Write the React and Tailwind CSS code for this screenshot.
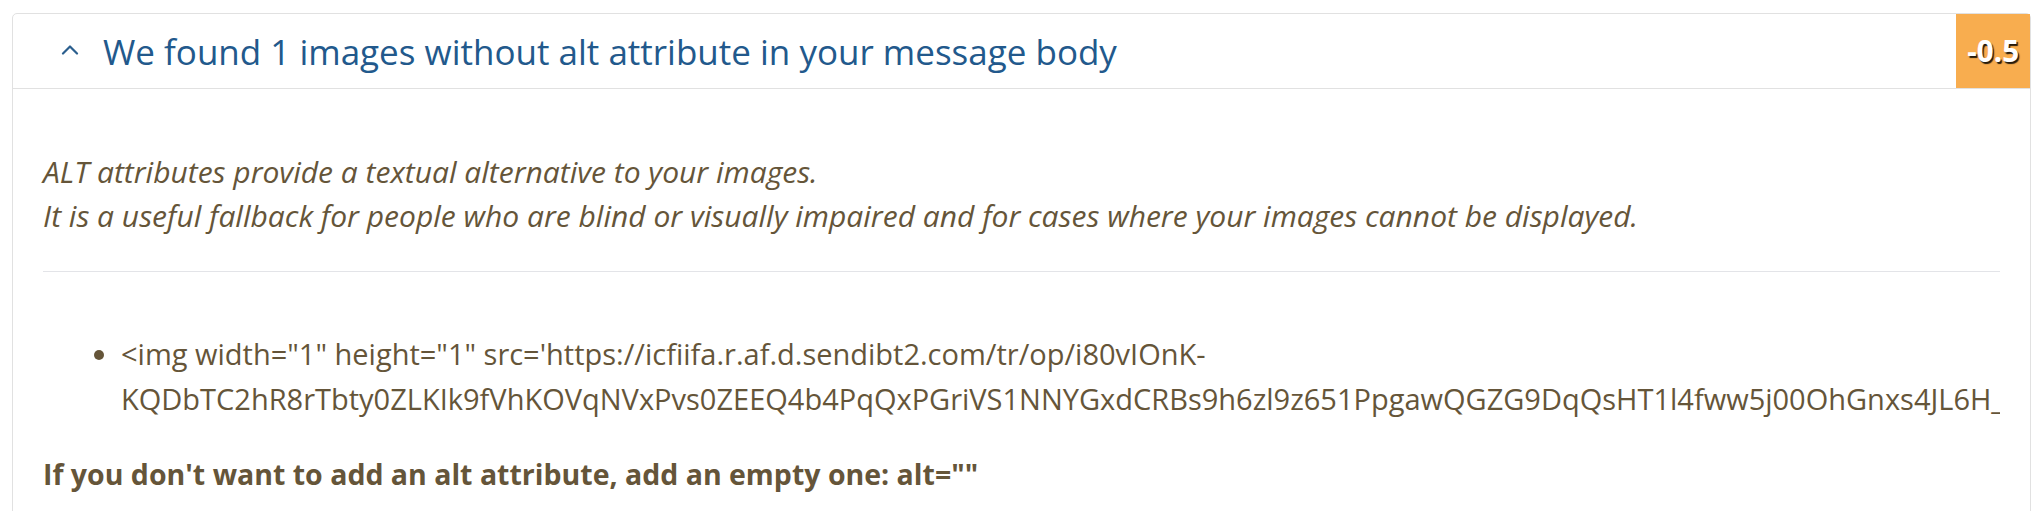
import React from "react";

export default function App() {
  return (
    <div className="bg-white w-[2035px] h-[511px] overflow-hidden pt-[13px] pl-[12px]">
      <div className="w-[2019px] border border-[#e1e1e1] rounded-[5px] bg-white">
        <div className="flex items-stretch h-[75px] border-b border-[#e1e1e1]">
          <div className="flex items-center flex-1 pl-[48px]">
            <svg width="18" height="11" viewBox="0 0 18 11" className="mr-[24px] mt-[-4px]">
              <polyline points="2,9.5 9,2.5 16,9.5" fill="none" stroke="#2b5f8e" strokeWidth="2.2" strokeLinecap="round" strokeLinejoin="round" />
            </svg>
            <span className="text-[35px] text-[#22598c] font-['Open_Sans',sans-serif] leading-none">
              We found 1 images without alt attribute in your message body
            </span>
          </div>
          <div className="w-[74px] bg-[#f8ad4f] flex items-center justify-end pr-[11px]">
            <span className="text-white font-bold text-[29.5px] font-['Open_Sans',sans-serif] leading-none [text-shadow:1.5px_1.5px_1px_rgba(0,0,0,0.85)]">
              -0.5
            </span>
          </div>
        </div>
        <div className="px-[30px] pt-[61px] pb-[60px] font-['Open_Sans',sans-serif] text-[#655539]">
          <div className="italic text-[30px] leading-[44px]">
            <p>ALT attributes provide a textual alternative to your images.</p>
            <p>It is a useful fallback for people who are blind or visually impaired and for cases where your images cannot be displayed.</p>
          </div>
          <hr className="mt-[33px] border-0 border-t border-[#e3e4e8]" />
          <div className="overflow-hidden">
            <ul className="list-disc pl-[78px] mt-[59px] text-[29px] leading-[45px] marker:text-[#655539]">
              <li className="whitespace-nowrap">
                <div>&lt;img width="1" height="1" src='https://icfiifa.r.af.d.sendibt2.com/tr/op/i80vIOnK-</div>
                <div>KQDbTC2hR8rTbty0ZLKIk9fVhKOVqNVxPvs0ZEEQ4b4PqQxPGriVS1NNYGxdCRBs9h6zl9z651PpgawQGZG9DqQsHT1l4fww5j00OhGnxs4JL6H_-4cQb8mS1</div>
              </li>
            </ul>
          </div>
          <p className="mt-[33px] font-bold text-[28.5px] leading-[40px]">
            If you don't want to add an alt attribute, add an empty one: alt=""
          </p>
        </div>
      </div>
    </div>
  );
}
